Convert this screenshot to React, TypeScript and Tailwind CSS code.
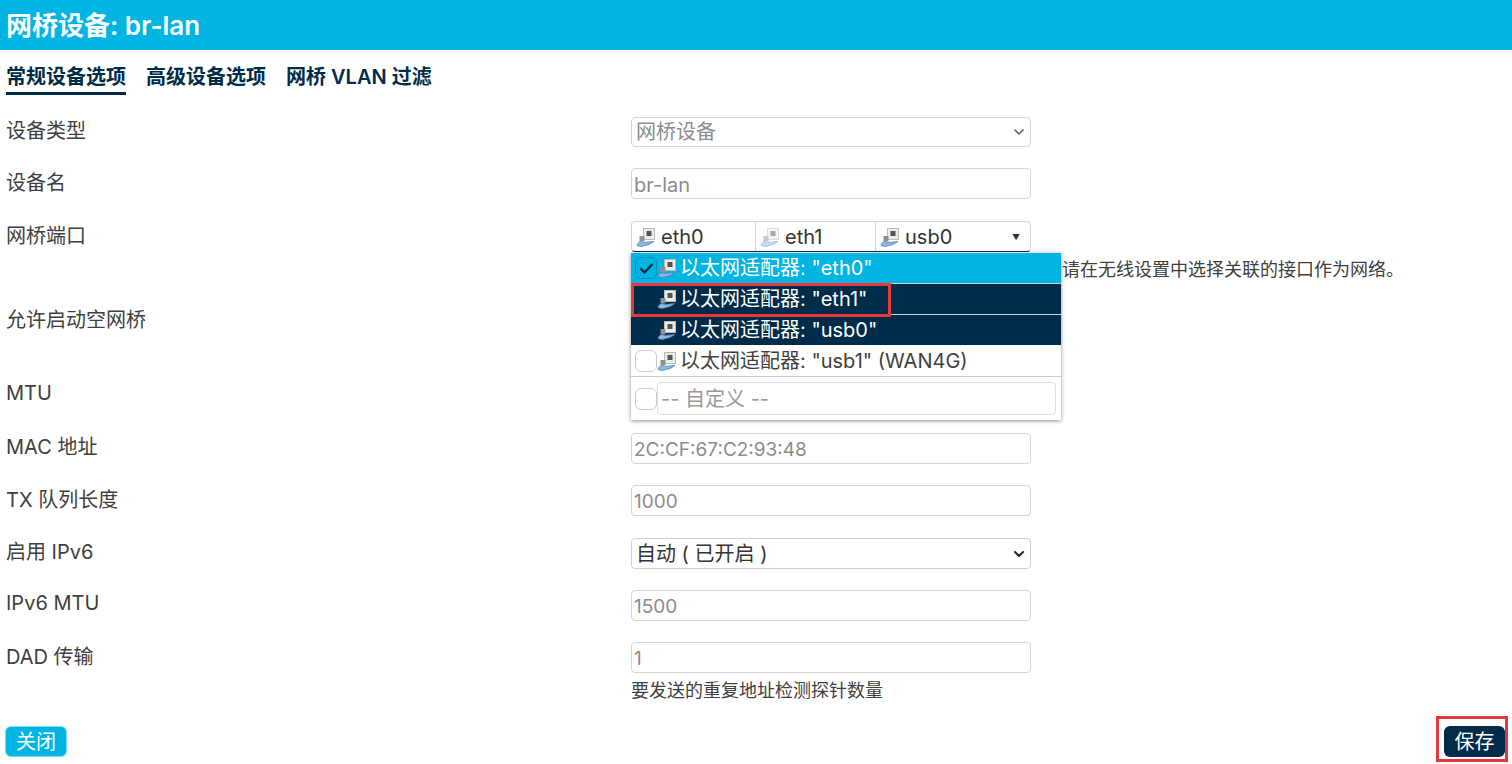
import React from 'react';
import { ChevronDown } from 'lucide-react';

const font = 'font-["Inter","Noto_Sans_CJK_SC",sans-serif]';

const AdapterIcon = ({ dim = false }: { dim?: boolean }) => (
    <svg width="20" height="20" viewBox="0 0 20 20" className={`shrink-0 ${dim ? 'opacity-50' : ''}`}>
        <rect x="7.5" y="1.5" width="11" height="11" fill="#ecece8" stroke="#bcbcb6" />
        <rect x="10.5" y="4" width="5" height="5" fill="#55554f" />
        <rect x="3.5" y="9" width="5" height="5.5" fill="#8a9190" />
        <path d="M1 18.5 C2 14.5 5 14 7.5 15.5 L18 14.5 L13 17.5 L5 19.5 Z" fill="#8fb9e0" stroke="#4a83bd" strokeWidth="0.8" />
    </svg>
);

const Field = ({ value, size = 'text-[19px]' }: { value: string; size?: string }) => (
    <input
        readOnly
        value={value}
        className={`w-[400px] h-[31px] px-0.5 pt-0.5 bg-white border border-[#d5d5d5] rounded text-[#8c8c8c] outline-none ${size}`}
    />
);

const Checkbox = ({ checked = false }: { checked?: boolean }) => (
    <span
        className={`shrink-0 w-[22px] h-[22px] rounded-md border flex items-center justify-center ${
            checked ? 'border-[#0090b8] bg-[#00b5e2]' : 'border-[#c8ccd4] bg-white'
        }`}
    >
        {checked && (
            <svg width="15" height="13" viewBox="0 0 15 13">
                <path d="M1.5 6.5 L5.5 10.5 L13.5 2" fill="none" stroke="#002b49" strokeWidth="2.4" />
            </svg>
        )}
    </span>
);

const Row = ({ label, rowClass, labelClass, children }: {
    label: string;
    rowClass: string;
    labelClass?: string;
    children?: React.ReactNode;
}) => (
    <div className={`flex items-start ${rowClass}`}>
        <div className={`w-[625px] shrink-0 text-[20px] leading-[26px] text-[#404040] ${labelClass ?? ''}`}>{label}</div>
        {children}
    </div>
);

const MenuRow = ({ rowClass, text, box, checked }: {
    rowClass: string;
    text: string;
    box?: boolean;
    checked?: boolean;
}) => (
    <div className={`flex items-center pl-1 text-[20px] ${rowClass}`}>
        {box ? <Checkbox checked={checked} /> : <span className="w-[22px] shrink-0" />}
        <AdapterIcon />
        <span className="ml-[3px] whitespace-nowrap">{text}</span>
    </div>
);

const App: React.FC = () => {
    return (
        <div className={`relative h-[764px] overflow-hidden bg-white ${font}`}>
            <div className="h-[50px] bg-[#00b5e2] pl-1.5 flex items-center text-[26px] font-semibold text-white">
                网桥设备: br-lan
            </div>

            <div className="px-1.5 flex gap-5 h-[45px] mt-[15px] text-[20px] text-[#002b49]">
                <div className="h-[30px] leading-6 font-bold border-b-[3px] border-[#002b49]">常规设备选项</div>
                <div className="leading-6 font-semibold">高级设备选项</div>
                <div className="leading-6 font-semibold">网桥 VLAN 过滤</div>
            </div>

            <div className="pl-1.5 mt-[7px]">
                <Row label="设备类型" rowClass="h-[51px]" labelClass="pt-px">
                    <div className="w-[400px] h-[30px] pl-1 pr-[3px] flex items-center justify-between border border-[#d5d5d5] rounded text-[20px] text-[#8c8c8c]">
                        网桥设备
                        <ChevronDown size={16} strokeWidth={2.5} className="text-[#666666]" />
                    </div>
                </Row>
                <Row label="设备名" rowClass="h-[53px]" labelClass="pt-0.5">
                    <Field value="br-lan" size="text-[20px]" />
                </Row>
                <Row label="网桥端口" rowClass="h-[34px]" labelClass="pt-0.5">
                    <div className="w-[400px] h-[31px] flex border border-[#d5d5d5] border-b-[#002b49] rounded text-[20px] text-[#333333]">
                        <div className="w-[124px] flex items-center gap-[5px] pl-1 border-r border-[#d5d5d5]">
                            <AdapterIcon />eth0
                        </div>
                        <div className="w-[120px] flex items-center gap-[5px] pl-1 border-r border-[#d5d5d5]">
                            <AdapterIcon dim />eth1
                        </div>
                        <div className="flex-1 flex items-center gap-[5px] pl-1">
                            <AdapterIcon />usb0
                            <span className="ml-auto mr-2.5 text-[8px]">▼</span>
                        </div>
                    </div>
                </Row>
                <div className="pl-[1056px] h-[49px] pt-[3px] text-[18px] leading-6 text-[#404040] whitespace-nowrap">
                    请在无线设置中选择关联的接口作为网络。
                </div>
                <Row label="允许启动空网桥" rowClass="h-[73px]" labelClass="pt-[3px]" />
                <Row label="MTU" rowClass="h-[56px]" labelClass="pt-[3px]" />
                <Row label="MAC 地址" rowClass="h-[52px]" labelClass="pt-px">
                    <Field value="2C:CF:67:C2:93:48" />
                </Row>
                <Row label="TX 队列长度" rowClass="h-[53px]" labelClass="pt-0.5">
                    <Field value="1000" />
                </Row>
                <Row label="启用 IPv6" rowClass="h-[52px]" labelClass="pt-px">
                    <div className="w-[400px] h-[31px] pl-1 pr-[3px] flex items-center justify-between border border-[#cfcfcf] rounded text-[20px] text-[#333333]">
                        自动 ( 已开启 )
                        <ChevronDown size={16} strokeWidth={3} className="text-[#222222]" />
                    </div>
                </Row>
                <Row label="IPv6 MTU" rowClass="h-[52px]">
                    <Field value="1500" />
                </Row>
                <Row label="DAD 传输" rowClass="h-[84px]" labelClass="pt-0.5">
                    <div>
                        <Field value="1" />
                        <div className="mt-1.5 text-[18px] leading-6 text-[#404040]">要发送的重复地址检测探针数量</div>
                    </div>
                </Row>
            </div>

            <div className="absolute left-[5px] right-[7px] top-[726px] flex justify-between text-[20px] text-white">
                <button className="w-[62px] h-[31px] rounded-md bg-[#00b5e2] border border-[#7fd9f0]">关闭</button>
                <button className="w-[61px] h-[31px] rounded-md bg-[#002b49]">保存</button>
            </div>

            {/* open port dropdown */}
            <div className="absolute left-[631px] top-[253px] w-[430px] h-[167px] bg-white shadow-[0_1px_4px_rgba(0,0,0,0.45)]">
                <MenuRow rowClass="h-[30px] bg-[#00b5e2] text-white" text={'以太网适配器: "eth0"'} box checked />
                <MenuRow rowClass="h-[31px] bg-[#002b49] text-white border-t border-[#c9d2d9]" text={'以太网适配器: "eth1"'} />
                <MenuRow rowClass="h-[31px] bg-[#002b49] text-white border-t border-[#c9d2d9]" text={'以太网适配器: "usb0"'} />
                <MenuRow rowClass="h-[31px] text-[#404040]" text={'以太网适配器: "usb1" (WAN4G)'} box />
                <div className="flex items-center h-[44px] pl-1 border-t border-[#cccccc]">
                    <Checkbox />
                    <div className="flex-1 h-[33px] mr-[5px] pl-[3px] flex items-center border border-[#dddddd] rounded text-[20px] text-[#999999]">
                        -- 自定义 --
                    </div>
                </div>
            </div>

            {/* red annotation boxes */}
            <div className="absolute left-[631px] top-[283px] w-[260px] h-[34px] border-[3px] border-[#e5383b]" />
            <div className="absolute left-[1436px] top-[716px] w-[72px] h-[46px] border-[3px] border-[#e5383b]" />
        </div>
    );
};

export default App;
